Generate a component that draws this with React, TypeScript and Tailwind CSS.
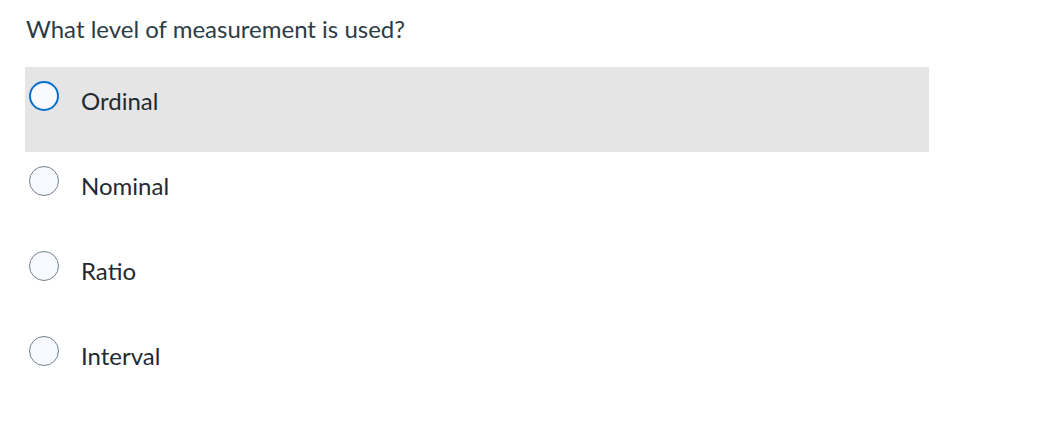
const options = ["Ordinal", "Nominal", "Ratio", "Interval"];

export default function App() {
  const selected = 0;

  return (
    <div className="min-h-[426px] bg-white font-['Lato','Liberation_Sans',sans-serif] text-[#2d3b45]">
      <div className="pl-[26px] pt-[12px]">
        <p className="text-[24px] leading-[34px]">What level of measurement is used?</p>
      </div>
      <div className="mt-[21px] ml-[25px] w-[904px]">
        {options.map((label, i) => (
          <label
            key={label}
            className={`flex h-[85px] items-start pl-[4px] pt-[14px] ${i === selected ? "bg-[#e5e5e5]" : ""}`}
          >
            <span
              className={`h-[30px] w-[30px] shrink-0 rounded-full bg-[#f7f9fe] ${
                i === selected ? "border-2 border-[#0770cf]" : "border border-[#73818c]"
              }`}
            />
            <span className="ml-[22px] mt-[3px] text-[24px] leading-[34px] text-[#1f2a33]">{label}</span>
          </label>
        ))}
      </div>
    </div>
  );
}
